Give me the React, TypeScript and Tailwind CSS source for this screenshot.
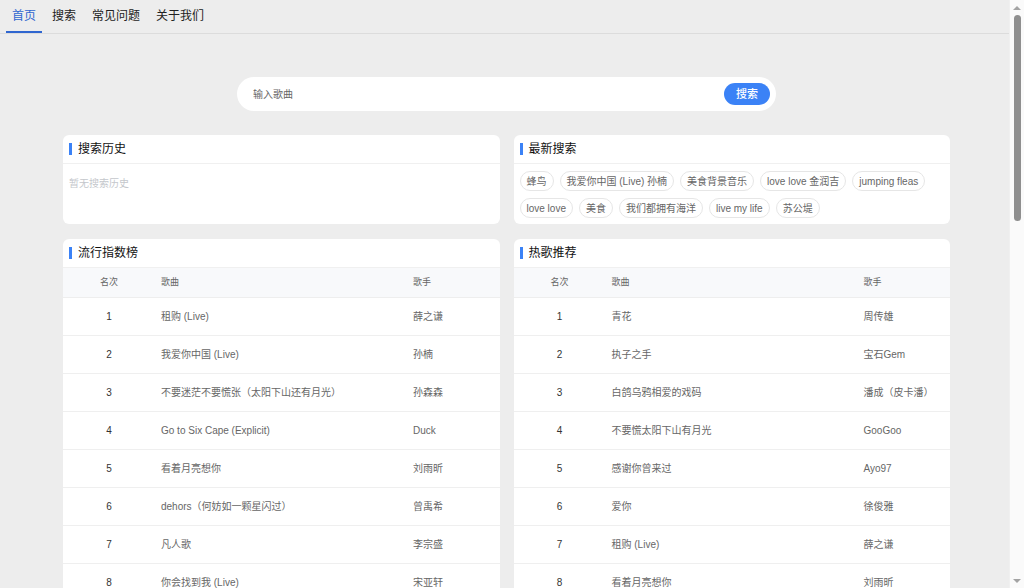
import React from 'react';

type Song = { name: string; singer: string };

const TABS = ['首页', '搜索', '常见问题', '关于我们'];

const TAGS = [
  '蜂鸟',
  '我爱你中国 (Live) 孙楠',
  '美食背景音乐',
  'love love 金润吉',
  'jumping fleas',
  'love love',
  '美食',
  '我们都拥有海洋',
  'live my life',
  '苏公堤',
];

const POPULAR: Song[] = [
  { name: '租购 (Live)', singer: '薛之谦' },
  { name: '我爱你中国 (Live)', singer: '孙楠' },
  { name: '不要迷茫不要慌张（太阳下山还有月光）', singer: '孙森森' },
  { name: 'Go to Six Cape (Explicit)', singer: 'Duck' },
  { name: '看着月亮想你', singer: '刘雨昕' },
  { name: 'dehors（何妨如一颗星闪过）', singer: '曾禹希' },
  { name: '凡人歌', singer: '李宗盛' },
  { name: '你会找到我 (Live)', singer: '宋亚轩' },
  { name: '若月亮没来', singer: '王宇宙Leto' },
  { name: '跳楼机', singer: 'LBI利比' },
];

const HOT: Song[] = [
  { name: '青花', singer: '周传雄' },
  { name: '执子之手', singer: '宝石Gem' },
  { name: '白鸽乌鸦相爱的戏码', singer: '潘成（皮卡潘）' },
  { name: '不要慌太阳下山有月光', singer: 'GooGoo' },
  { name: '感谢你曾来过', singer: 'Ayo97' },
  { name: '爱你', singer: '徐俊雅' },
  { name: '租购 (Live)', singer: '薛之谦' },
  { name: '看着月亮想你', singer: '刘雨昕' },
  { name: '我爱你中国 (Live)', singer: '孙楠' },
  { name: '凡人歌', singer: '李宗盛' },
];

const CardTitle: React.FC<{ title: string }> = ({ title }) => (
  <div className="h-[29px] flex items-center px-[6px] border-b border-[#f0f0f0]">
    <span className="w-[3px] h-[12px] bg-[#3b82f6] mr-[6px]" />
    <span className="text-[12px] font-normal text-[#111]">{title}</span>
  </div>
);

const SongTable: React.FC<{ title: string; songs: Song[] }> = ({ title, songs }) => (
  <div className="bg-white rounded-[6px] overflow-hidden">
    <CardTitle title={title} />
    <div className="h-[30px] flex items-center bg-[#f8f9fb] border-b border-[#eeeeee] text-[9px] text-[#666]">
      <div className="w-[92px] text-center">名次</div>
      <div className="w-[252px] px-[6px]">歌曲</div>
      <div className="flex-1 px-[6px]">歌手</div>
    </div>
    {songs.map((s, i) => (
      <div key={i} className="h-[38px] flex items-center border-b border-[#efefef] text-[10px]">
        <div className="w-[92px] text-center text-[#333]">{i + 1}</div>
        <div className="w-[252px] px-[6px] text-[#666] truncate">{s.name}</div>
        <div className="flex-1 px-[6px] text-[#666]">{s.singer}</div>
      </div>
    ))}
  </div>
);

// page scrollbar, drawn as part of the window chrome
const ScrollBar = () => (
  <div className="w-[15px] h-full flex flex-col items-center bg-[#fafafa] border-l border-[#f0f0f0]">
    <div className="h-[15px] flex items-center justify-center">
      <span className="w-0 h-0 border-x-[4px] border-x-transparent border-b-[4px] border-b-[#a3a3a3]" />
    </div>
    <div className="flex-1 w-full flex flex-col items-center">
      <div className="w-[7px] h-[206px] rounded-full bg-[#8f8f8f]" />
    </div>
    <div className="h-[15px] flex items-center justify-center">
      <span className="w-0 h-0 border-x-[4px] border-x-transparent border-t-[4px] border-t-[#a3a3a3]" />
    </div>
  </div>
);

export default function App() {
  return (
    <div
      className="h-screen flex overflow-hidden bg-[#ededed]"
      style={{ fontFamily: '"Liberation Sans", "Noto Sans CJK SC", sans-serif' }}
    >
      <main className="flex-1 min-w-0">
        <nav className="h-[34px] flex items-end px-[6px] gap-[4px] border-b border-[#dcdcdc]">
          {TABS.map((t, i) => (
            <div
              key={t}
              className={`h-full flex items-center px-[6px] text-[12px] border-b-2 ${
                i === 0 ? 'text-[#2f66d0] border-[#2f66d0]' : 'text-[#222] border-transparent'
              }`}
            >
              {t}
            </div>
          ))}
        </nav>

        <div className="pl-[4px]">
          <div className="flex justify-center pt-[43px]">
            <div className="w-[539px] h-[34px] bg-white rounded-full flex items-center pl-[16px] pr-[6px]">
              <input
                className="flex-1 text-[10px] text-[#333] placeholder-[#666] outline-none bg-transparent"
                placeholder="输入歌曲"
              />
              <button className="h-[22px] w-[46px] rounded-full bg-[#3b82f6] text-white text-[11px] font-medium">
                搜索
              </button>
            </div>
          </div>

          <div className="w-[887px] mx-auto mt-[24px] grid grid-cols-2 gap-x-[14px] gap-y-[15px]">
            <div className="bg-white rounded-[6px] h-[89px]">
              <CardTitle title="搜索历史" />
              <div className="px-[6px] pt-[12px] text-[10px] text-[#c4c7cc]">暂无搜索历史</div>
            </div>
            <div className="bg-white rounded-[6px] h-[89px]">
              <CardTitle title="最新搜索" />
              <div className="flex flex-wrap gap-x-[6px] gap-y-[7px] px-[6px] pt-[7px]">
                {TAGS.map(t => (
                  <span
                    key={t}
                    className="h-[20px] flex items-center px-[6px] rounded-full border border-[#e6e6e6] text-[10px] text-[#666]"
                  >
                    {t}
                  </span>
                ))}
              </div>
            </div>
            <SongTable title="流行指数榜" songs={POPULAR} />
            <SongTable title="热歌推荐" songs={HOT} />
          </div>
        </div>
      </main>
      <ScrollBar />
    </div>
  );
}
